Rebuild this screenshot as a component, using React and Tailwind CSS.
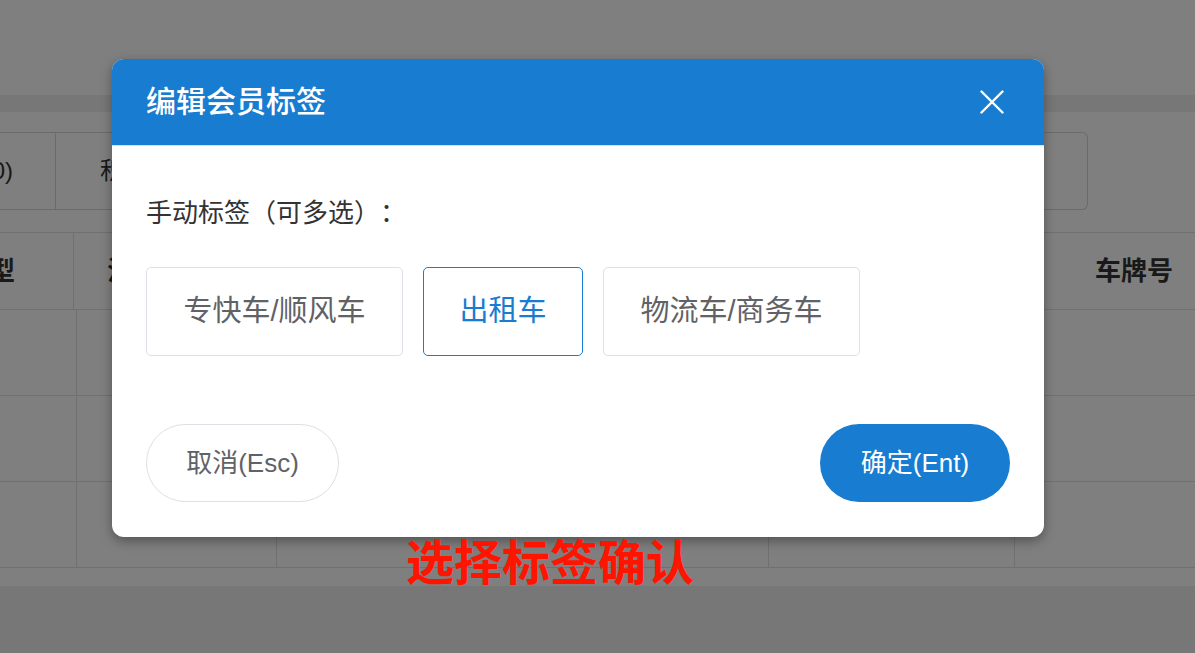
const tags = [
  { name: "专快车/顺风车", w: "w-[257px]", on: false },
  { name: "出租车", w: "w-[160px]", on: true },
  { name: "物流车/商务车", w: "w-[257px]", on: false },
];

function Row() {
  return (
    <div className="flex h-[86px] border-b border-[#e0e0e0]">
      <div className="w-[77px] border-r border-[#e0e0e0]" />
      <div className="w-[200px] border-r border-[#e0e0e0]" />
      <div className="w-[492px] border-r border-[#e0e0e0]" />
      <div className="w-[246px] border-r border-[#e0e0e0]" />
      <div className="flex-1" />
    </div>
  );
}

export default function App() {
  return (
    <div className="relative h-[653px] w-full overflow-hidden bg-white font-['Liberation_Sans','Noto_Sans_CJK_SC',sans-serif]">
      {/* page behind the dialog */}
      <div className="flex h-full flex-col">
        <div className="h-[95px] shrink-0" />
        <div className="h-[17px] shrink-0 bg-[#eeeeee]" />
        <div className="h-[120px] shrink-0 pt-[20px]">
          <div className="flex h-[78px] w-[1088px] rounded-r-[6px] border border-l-0 border-[#d6d6d6]">
            <div className="flex w-[56px] items-center justify-end whitespace-nowrap border-r border-[#d6d6d6] pr-[42px] text-[24px] text-[#333]">
              全部(0)
            </div>
            <div className="flex flex-1 items-center whitespace-nowrap pl-[44px] text-[24px] text-[#333]">
              积分(0)
            </div>
          </div>
        </div>
        <div className="flex h-[78px] shrink-0 border-y border-[#e0e0e0] text-[26px] font-bold text-[#333]">
          <div className="flex w-[74px] items-center justify-end whitespace-nowrap border-r border-[#e0e0e0] pr-[58px]">
            车型
          </div>
          <div className="flex w-[941px] items-center whitespace-nowrap pl-[33px]">注册时间</div>
          <div className="flex flex-1 items-center whitespace-nowrap pl-[80px]">车牌号</div>
        </div>
        <Row />
        <Row />
        <Row />
        <div className="h-[18px] shrink-0" />
        <div className="flex-1 bg-[#eeeeee]" />
      </div>

      {/* mask + dialog */}
      <div className="absolute inset-0 bg-black/50 pl-[112px] pt-[59px]">
        <div className="flex h-[478px] w-[932px] flex-col overflow-hidden rounded-[12px] bg-white shadow-[0_4px_12px_rgba(0,0,0,0.35)]">
          <div className="flex h-[87px] shrink-0 items-center justify-between border-b border-[#cfe3f5] bg-[#187cd0] pl-[34px] pr-[40px]">
            <span className="text-[30px] font-medium leading-none text-white">编辑会员标签</span>
            <svg width="24" height="24" viewBox="0 0 24 24" fill="none" stroke="white" strokeWidth="2.4" strokeLinecap="round">
              <path d="M1.5 1.5 22.5 22.5M22.5 1.5 1.5 22.5" />
            </svg>
          </div>

          <div className="flex flex-1 flex-col px-[34px] pt-[49px]">
            <div className="text-[26px] leading-[36px] text-[#333] [text-spacing-trim:space-all]">
              手动标签（可多选）：
            </div>

            <div className="mt-[36px] flex gap-5">
              {tags.map((t) => (
                <div
                  key={t.name}
                  className={`flex h-[89px] items-center justify-center rounded-[5px] border text-[29px] ${t.w} ${
                    t.on ? "border-[#187cd0] text-[#187cd0]" : "border-[#dfdfe6] text-[#606266]"
                  }`}
                >
                  {t.name}
                </div>
              ))}
            </div>

            <div className="mt-[68px] flex justify-between">
              <button className="h-[78px] w-[193px] rounded-full border border-[#dfdfe6] bg-white text-[26px] text-[#606266]">
                取消(Esc)
              </button>
              <button className="h-[78px] w-[190px] rounded-full bg-[#187cd0] text-[26px] text-white">
                确定(Ent)
              </button>
            </div>
          </div>
        </div>
      </div>

      {/* annotation */}
      <div className="absolute left-[406px] top-[540px] text-[48px] font-bold leading-[48px] text-[#ff1400]">
        选择标签确认
      </div>
    </div>
  );
}
